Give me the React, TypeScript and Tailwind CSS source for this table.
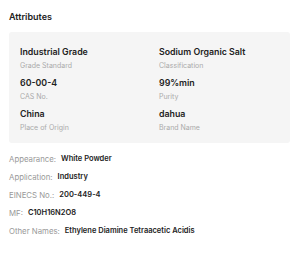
import React from "react";

const items = [
  ["Industrial Grade", "Grade Standard"],
  ["Sodium Organic Salt", "Classification"],
  ["60-00-4", "CAS No."],
  ["99%min", "Purity"],
  ["China", "Place of Origin"],
  ["dahua", "Brand Name"],
];

const rows = [
  ["Appearance:", "White Powder"],
  ["Application:", "Industry"],
  ["EINECS No.:", "200-449-4"],
  ["MF:", "C10H16N2O8"],
  ["Other Names:", "Ethylene Diamine Tetraacetic Acidis"],
];

export default function App() {
  return (
    <div
      className="w-[300px] h-[253px] bg-white overflow-hidden px-[9px] pt-[11px]"
      style={{ fontFamily: "Inter, 'Open Sans', sans-serif" }}
    >
      <div className="text-[9px] font-semibold text-[#222] leading-[12px]">Attributes</div>
      <div className="mt-[9px] w-[281px] bg-[#f5f5f5] rounded-[3px] pl-[11px] pt-[14px] pb-[10px] grid grid-cols-[139px_1fr] gap-y-[6px]">
        {items.map(([v, l]) => (
          <div key={l} className="flex flex-col">
            <div className="text-[8.8px] font-semibold text-[#222] leading-[12px]">{v}</div>
            <div className="text-[7px] text-[#aaa] leading-[10px] mt-[3px]">{l}</div>
          </div>
        ))}
      </div>
      <div className="mt-[11px] flex flex-col gap-[8px]">
        {rows.map(([k, v]) => (
          <div key={k} className="flex items-center gap-[5px] leading-[10px]">
            <span className="text-[7.8px] text-[#999]">{k}</span>
            <span className="text-[7.5px] font-semibold text-[#222]">{v}</span>
          </div>
        ))}
      </div>
    </div>
  );
}
